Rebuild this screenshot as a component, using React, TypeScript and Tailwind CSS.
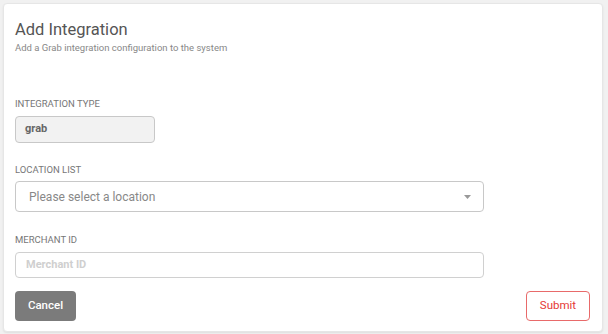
import React from 'react';

const Label: React.FC<{ children: React.ReactNode }> = ({ children }) => (
    <div className="text-[9.5px] leading-[12px] text-[#777] uppercase">{children}</div>
);

export default function App() {
    return (
        <div className="w-[608px] h-[334px] bg-[#f1f1f1] pt-[3px] pl-[3px] pr-[5px] font-['Roboto',sans-serif]">
            <div className="h-[329px] bg-white rounded-[4px] border border-[#e6e6e6] shadow-[0_1px_2px_rgba(0,0,0,0.08)] px-[11px] pt-[15px] flex flex-col">
                <h1 className="text-[16.5px] leading-[22px] text-[#555] font-normal">Add Integration</h1>
                <p className="text-[9.5px] leading-[14px] text-[#888]">Add a Grab integration configuration to the system</p>

                <div className="mt-[43px]">
                    <Label>Integration Type</Label>
                    <div className="mt-[6px] w-[140px] h-[27px] bg-[#f2f2f2] border border-[#c8c8c8] rounded-[4px] flex items-center px-[9px] text-[11px] font-bold text-[#666]">
                        grab
                    </div>
                </div>

                <div className="mt-[21px] w-[469px]">
                    <Label>Location List</Label>
                    <div className="mt-[5px] h-[31px] border border-[#c8c8c8] rounded-[4px] flex items-center justify-between pl-[13px] pr-[9px]">
                        <span className="text-[12px] text-[#888]">Please select a location</span>
                        <svg width="7" height="4" viewBox="0 0 7 4" className="mr-[3px]">
                            <path d="M0 0H7L3.5 4Z" fill="#999" />
                        </svg>
                    </div>
                </div>

                <div className="mt-[22px] w-[469px]">
                    <Label>Merchant ID</Label>
                    <div className="mt-[6px] h-[26px] border border-[#d0d0d0] rounded-[4px] flex items-center px-[10px] text-[11px] font-bold text-[#cfcfcf]">
                        Merchant ID
                    </div>
                </div>

                <div className="mt-[13px] flex justify-between pr-[1px]">
                    <button className="w-[61px] h-[30px] bg-[#7b7b7b] rounded-[4px] text-white text-[11.5px] font-medium">
                        Cancel
                    </button>
                    <button className="w-[64px] h-[30px] bg-white border border-[#e86a6a] rounded-[4px] text-[#e53935] text-[11.5px]">
                        Submit
                    </button>
                </div>
            </div>
        </div>
    );
}
